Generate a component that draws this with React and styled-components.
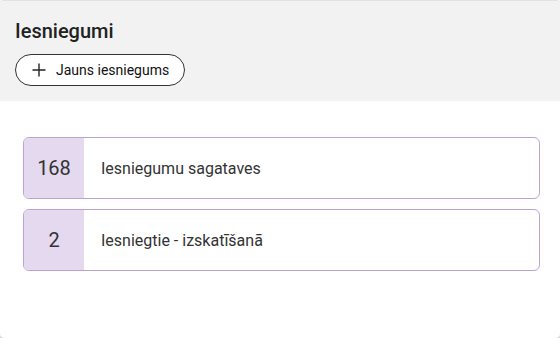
import React from "react";
import styled, { createGlobalStyle } from "styled-components";

const GlobalStyle = createGlobalStyle`
  body {
    margin: 0;
    font-family: Roboto, "Liberation Sans", sans-serif;
    background: #fff;
  }
`;

const Panel = styled.section`
  width: 560px;
  height: 338px;
  border-radius: 4px;
  box-shadow: 0 1px 2px rgba(0, 0, 0, 0.35);
  border-top: 1px solid #e2e2e2;
  box-sizing: border-box;
  overflow: hidden;
  background: #fff;
`;

const Header = styled.header`
  background: #f2f2f2;
  height: 100px;
  box-sizing: border-box;
  padding: 18px 15px 0;
  display: flex;
  flex-direction: column;
  align-items: flex-start;
  gap: 11px;
`;

const Title = styled.h1`
  margin: 0;
  font-size: 20px;
  font-weight: 500;
  color: #222;
  line-height: 24px;
`;

const AddButton = styled.button`
  display: flex;
  align-items: center;
  gap: 9px;
  height: 32px;
  padding: 0 15px 0 15px;
  border: 1px solid #333;
  border-radius: 16px;
  background: #fff;
  font-family: inherit;
  font-size: 14px;
  color: #111;
  cursor: pointer;
`;

const List = styled.div`
  display: flex;
  flex-direction: column;
  gap: 10px;
  padding: 36px 20px 0 23px;
`;

const Row = styled.a`
  display: flex;
  height: 62px;
  border: 1px solid #b9a4d3;
  border-radius: 6px;
  overflow: hidden;
  text-decoration: none;
  background: #fff;
  box-sizing: border-box;
`;

const Count = styled.div`
  width: 60px;
  background: #e4d9ef;
  display: flex;
  align-items: center;
  justify-content: center;
  font-size: 20px;
  color: #333;
`;

const Label = styled.div`
  display: flex;
  align-items: center;
  padding-left: 17px;
  font-size: 16px;
  color: #333;
`;

const PlusIcon = () => (
  <svg width="16" height="16" viewBox="0 0 16 16">
    <path d="M8 1.5v13M1.5 8h13" stroke="#222" strokeWidth="1.4" fill="none" />
  </svg>
);

const items = [
  { count: 168, label: "Iesniegumu sagataves" },
  { count: 2, label: "Iesniegtie - izskatīšanā" },
];

export default function App() {
  return (
    <>
      <GlobalStyle />
      <Panel>
        <Header>
          <Title>Iesniegumi</Title>
          <AddButton>
            <PlusIcon />
            Jauns iesniegums
          </AddButton>
        </Header>
        <List>
          {items.map((item) => (
            <Row key={item.label}>
              <Count>{item.count}</Count>
              <Label>{item.label}</Label>
            </Row>
          ))}
        </List>
      </Panel>
    </>
  );
}
